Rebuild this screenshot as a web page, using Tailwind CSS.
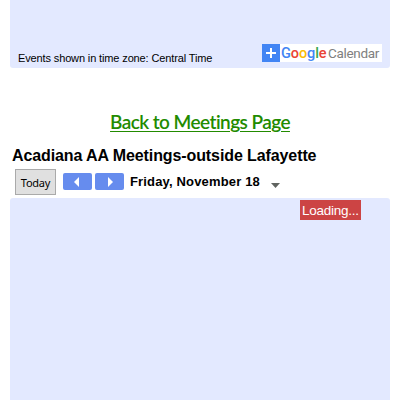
<!DOCTYPE html>
<html lang="en">
<head>
<meta charset="utf-8">
<title>Meetings</title>
<script src="https://cdn.jsdelivr.net/npm/@tailwindcss/browser@4"></script>
</head>
<body class="h-[400px] overflow-hidden bg-white px-[10px] font-['Liberation_Sans',sans-serif] text-black">
<section class="flex h-[68px] items-end justify-between rounded-b-[3px] bg-[#e3e9ff] pr-2 pl-2">
  <p class="pb-[3px] text-[11px] leading-[14px] tracking-[-0.13px] whitespace-nowrap">Events shown in time zone: Central Time</p>
  <div class="mb-[6px] flex h-[18px] w-[120px] items-center bg-white whitespace-nowrap">
    <svg class="h-[18px] w-[18px] shrink-0" viewBox="0 0 18 18"><path fill="#4285f4" d="M0 0h18v18H0z"/><path d="M4 9h10M9 4v10" stroke="#fff" stroke-width="2"/></svg>
    <span class="ml-[1px] w-[47px] shrink-0 font-[Roboto,sans-serif] text-[14.5px] leading-[17px] font-medium tracking-[-0.1px] text-[#4285f4]">G<span class="text-[#ea4335]">o</span><span class="text-[#fbbc05]">o</span>g<span class="text-[#34a853]">l</span><span class="text-[#ea4335]">e</span></span>
    <span class="font-[Roboto,sans-serif] text-[13.5px] leading-[18px] tracking-[-0.33px] text-[#808080]">Calendar</span>
  </div>
</section>
<div class="flex h-[76px] items-center justify-center pt-[31px]">
  <a href="#" class="font-[Lato,sans-serif] text-[19px] leading-6 font-semibold tracking-[-0.56px] whitespace-nowrap text-[#228b00] underline decoration-1 underline-offset-2">Back to Meetings Page</a>
</div>
<main>
  <h1 class="pl-[2px] text-base leading-6 font-bold tracking-[-0.1px] whitespace-nowrap">Acadiana AA Meetings-outside Lafayette</h1>
  <div class="flex h-[30px] items-start pl-[5px]">
    <button class="mt-[1px] h-[26px] w-[41px] border border-[#aaa] bg-[#e0e0e0] pt-px font-['Noto_Sans',sans-serif] text-[11px] leading-[23px] tracking-[-0.25px]">Today</button>
    <button class="mt-[5px] ml-[7px] h-[17px] w-[29px] rounded-[2px] bg-[#668cee]"><svg class="h-[17px] w-[29px]" viewBox="0 0 29 17"><path fill="#fff" d="M16 4v10l-5-5z"/></svg></button>
    <button class="mt-[5px] ml-[3px] h-[17px] w-[29px] rounded-[2px] bg-[#668cee]"><svg class="h-[17px] w-[29px]" viewBox="0 0 29 17"><path fill="#fff" d="M13 4v10l5-5z"/></svg></button>
    <span class="mt-[6px] ml-[6px] w-[130px] text-[13px] leading-4 font-bold tracking-[0.16px] whitespace-nowrap">Friday, November 18</span>
    <svg class="mt-[15px] ml-[11px] h-[5px] w-[9px]" viewBox="0 0 9 5"><path fill="#606460" d="M0 0h9L4.500 5z"/></svg>
  </div>
  <section class="flex h-[202px] items-start justify-end rounded-t-[3px] bg-[#e3e9ff] pt-[2px] pr-[29px]">
    <div class="h-[20px] w-[61px] bg-[#cc4444] pl-[2px] text-[13.5px] leading-[21px] tracking-[-0.25px] whitespace-nowrap text-white">Loading...</div>
  </section>
</main>
</body>
</html>
